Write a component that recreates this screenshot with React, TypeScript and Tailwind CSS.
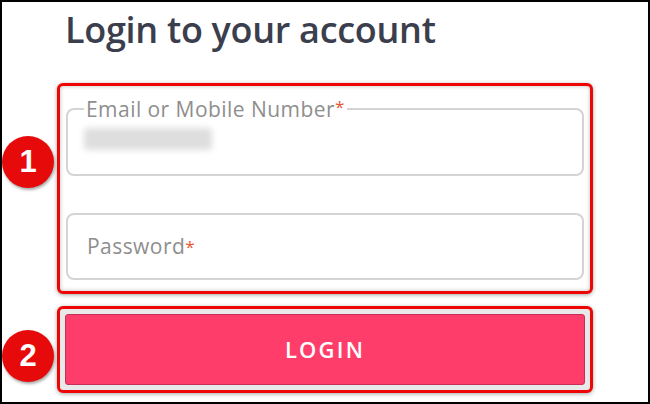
const Badge = ({ n, className }: { n: string; className: string }) => (
  <div
    className={`absolute left-0 flex h-[52px] w-[52px] items-center justify-center rounded-full bg-[#e60a0a] text-[31px] font-semibold text-white shadow-[1px_2px_3px_rgba(0,0,0,0.35)] ${className}`}
    style={{ fontFamily: "Arial, 'Liberation Sans', sans-serif" }}
  >
    {n}
  </div>
);

const Star = () => <span className="align-top text-[17px] leading-[20px] text-[#e8552e]">*</span>;

export default function App() {
  return (
    <div
      className="relative h-[404px] w-[650px] overflow-hidden border-2 border-black bg-white"
      style={{ fontFamily: "'Open Sans', sans-serif" }}
    >
      <h1 className="ml-[63px] mt-[7px] text-[36px] font-semibold leading-[42px] tracking-[-0.3px] text-[#3b3e4c]">
        Login to your account
      </h1>

      <div className="ml-[55px] mt-[32px] h-[211px] w-[536px] rounded-[6px] border-[3px] border-[#ee0606] bg-white px-[6px] pt-[11px] shadow-[0_1px_4px_rgba(0,0,0,0.35),inset_0_0_4px_rgba(0,0,0,0.25)]">
        <fieldset className="h-[79px] rounded-[8px] border-2 border-[#d4d4d4] px-[16px]">
          <legend className="px-[2px] text-[21px] leading-[24px] tracking-[0.45px] text-[#8e8e8e]">
            Email or Mobile Number<Star />
          </legend>
          <div className="mt-[7px] h-[22px] w-[128px] rounded bg-[#dedede] blur-[3px]" />
        </fieldset>

        <div className="mt-[37px] flex h-[67px] items-center rounded-[8px] border-2 border-[#d4d4d4] px-[19px] text-[21px] tracking-[0.45px] text-[#8e8e8e]">
          Password<Star />
        </div>
      </div>

      <div className="ml-[55px] mt-[12px] h-[87px] w-[536px] rounded-[6px] border-[3px] border-[#ee0606] bg-[#e9e9e9] p-[5px] shadow-[0_1px_4px_rgba(0,0,0,0.35)]">
        <button className="flex h-full w-full items-center justify-center rounded-[3px] border border-[#c43058] bg-[#ff3d6b] text-[22px] font-semibold tracking-[2.2px] text-white">
          LOGIN
        </button>
      </div>

      <Badge n="1" className="top-[134px]" />
      <Badge n="2" className="top-[328px]" />
    </div>
  );
}
